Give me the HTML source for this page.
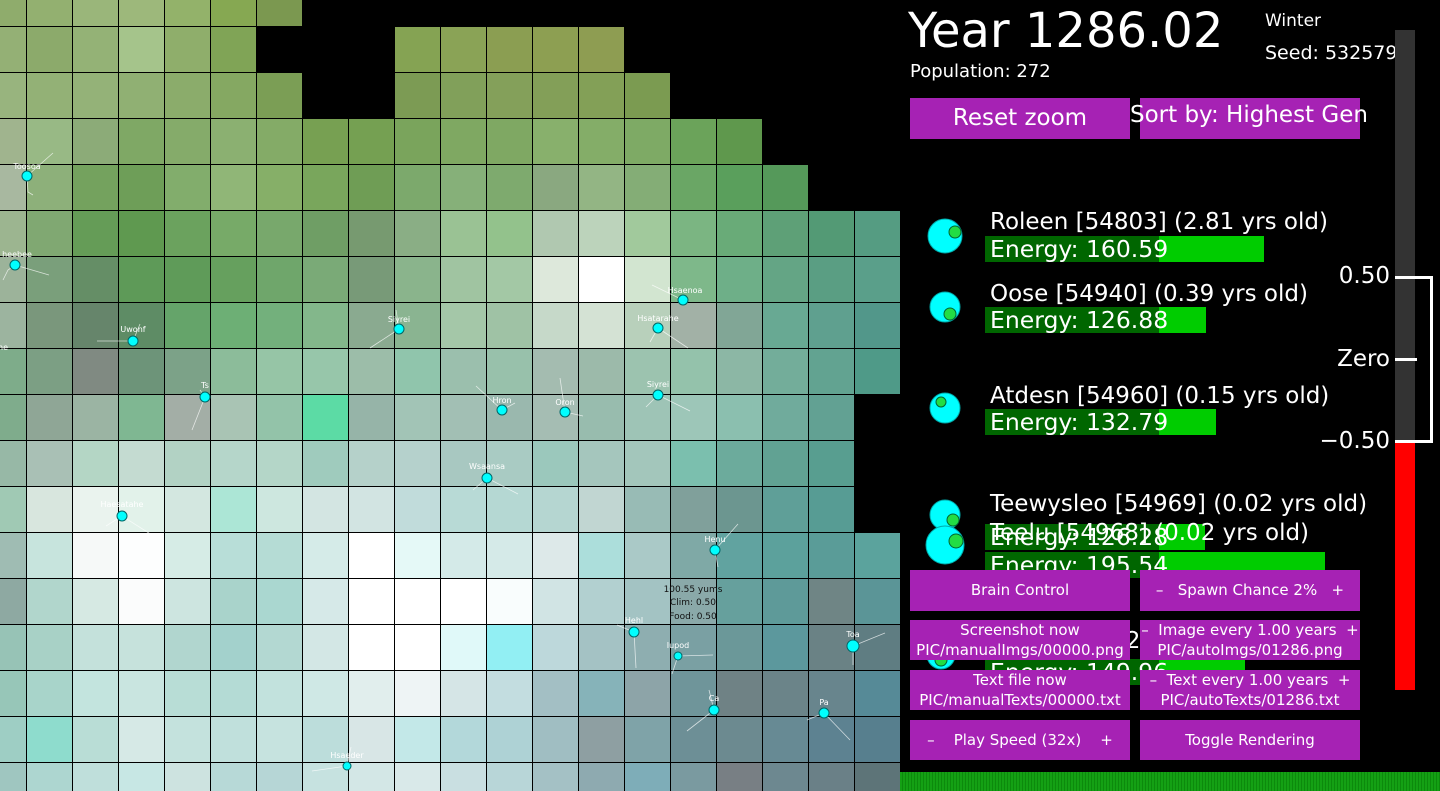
<!DOCTYPE html>
<html style="height:791px;overflow:hidden"><head><meta charset="utf-8"><style>
*{margin:0;padding:0;box-sizing:border-box}
html,body{width:1440px;height:791px;overflow:hidden}
body{background:#000;position:relative;font-family:"DejaVu Sans","Liberation Sans",sans-serif;color:#fff}
#g{position:absolute;left:-19px;top:-19px;display:grid;grid-template-columns:repeat(20,45px);grid-auto-rows:45px;gap:1px;background:#000;width:920px;height:810px;overflow:hidden}
#g i{display:block}
.k{background:#000}
.t{position:absolute;white-space:nowrap;line-height:1}
.btn{position:absolute;background:#a622b4;width:220px;text-align:center;color:#fff;font-size:15px;white-space:nowrap;overflow:visible}
.bar{position:absolute;height:26px;background:#006600}
.bar b{position:absolute;top:0;bottom:0;background:#00cc00}
.en{position:absolute;left:5px;top:0px;font-size:23.5px;line-height:26px;white-space:nowrap}
.nm{position:absolute;font-size:23px;white-space:nowrap;line-height:1}
</style></head><body>
<div id="g">
<i style="background:#8fac6c"></i><i style="background:#93b070"></i><i style="background:#9ab67a"></i><i style="background:#9db87b"></i><i style="background:#93b26a"></i><i style="background:#86a852"></i><i style="background:#7b9850"></i><i class="k"></i><i class="k"></i><i class="k"></i><i class="k"></i><i class="k"></i><i class="k"></i><i class="k"></i><i class="k"></i><i class="k"></i><i class="k"></i><i class="k"></i><i class="k"></i><i class="k"></i>
<i style="background:#94b075"></i><i style="background:#8caa6b"></i><i style="background:#94b276"></i><i style="background:#a5c48b"></i><i style="background:#8fae6b"></i><i style="background:#80a456"></i><i class="k"></i><i class="k"></i><i class="k"></i><i style="background:#85a353"></i><i style="background:#8aa356"></i><i style="background:#8b9e52"></i><i style="background:#8d9f52"></i><i style="background:#8e9d52"></i><i class="k"></i><i class="k"></i><i class="k"></i><i class="k"></i><i class="k"></i><i class="k"></i>
<i style="background:#98b47e"></i><i style="background:#93b176"></i><i style="background:#94b278"></i><i style="background:#90b073"></i><i style="background:#8bac6b"></i><i style="background:#85a862"></i><i style="background:#7b9e55"></i><i class="k"></i><i class="k"></i><i style="background:#7c9b54"></i><i style="background:#81a05a"></i><i style="background:#84a05a"></i><i style="background:#839f58"></i><i style="background:#83a057"></i><i style="background:#7b9b51"></i><i class="k"></i><i class="k"></i><i class="k"></i><i class="k"></i><i class="k"></i>
<i style="background:#a0b48e"></i><i style="background:#98b985"></i><i style="background:#8cab78"></i><i style="background:#7fa865"></i><i style="background:#85ab6a"></i><i style="background:#8bb071"></i><i style="background:#84ab67"></i><i style="background:#77a052"></i><i style="background:#75a052"></i><i style="background:#7aa45c"></i><i style="background:#7fa862"></i><i style="background:#7fa863"></i><i style="background:#88b06c"></i><i style="background:#84ad68"></i><i style="background:#7eaa65"></i><i style="background:#6ba35a"></i><i style="background:#5f984d"></i><i class="k"></i><i class="k"></i><i class="k"></i>
<i style="background:#a8b8a0"></i><i style="background:#8db07a"></i><i style="background:#74a25e"></i><i style="background:#6e9e58"></i><i style="background:#82ad6c"></i><i style="background:#90b677"></i><i style="background:#86af68"></i><i style="background:#79a65c"></i><i style="background:#6f9d55"></i><i style="background:#7ca96c"></i><i style="background:#86b079"></i><i style="background:#7eaa6e"></i><i style="background:#8aa880"></i><i style="background:#93b584"></i><i style="background:#84ad76"></i><i style="background:#6aa665"></i><i style="background:#5a9f5c"></i><i style="background:#55995a"></i><i class="k"></i><i class="k"></i>
<i style="background:#9cb590"></i><i style="background:#80a872"></i><i style="background:#659c57"></i><i style="background:#5f9950"></i><i style="background:#6ba25e"></i><i style="background:#77aa68"></i><i style="background:#78a86c"></i><i style="background:#6f9e65"></i><i style="background:#779a70"></i><i style="background:#8aae85"></i><i style="background:#9ac294"></i><i style="background:#93c28c"></i><i style="background:#b0c8b0"></i><i style="background:#bcd3bb"></i><i style="background:#a1c99c"></i><i style="background:#7bb582"></i><i style="background:#69ab78"></i><i style="background:#5ea077"></i><i style="background:#539a75"></i><i style="background:#559c82"></i>
<i style="background:#9cb39a"></i><i style="background:#7a9f7b"></i><i style="background:#658e66"></i><i style="background:#5e9a58"></i><i style="background:#5f9b59"></i><i style="background:#66a05e"></i><i style="background:#6fa66b"></i><i style="background:#7aaa77"></i><i style="background:#789a78"></i><i style="background:#8ab48c"></i><i style="background:#a0c4a1"></i><i style="background:#a3c8a5"></i><i style="background:#dde8db"></i><i style="background:#ffffff"></i><i style="background:#d2e5d0"></i><i style="background:#7eb88a"></i><i style="background:#6eaf88"></i><i style="background:#64a585"></i><i style="background:#5a9e83"></i><i style="background:#5a9f8a"></i>
<i style="background:#9cb49f"></i><i style="background:#7a977c"></i><i style="background:#66856b"></i><i style="background:#5e8c65"></i><i style="background:#65a46a"></i><i style="background:#6daf75"></i><i style="background:#73b07c"></i><i style="background:#83b78b"></i><i style="background:#8aaa90"></i><i style="background:#8ab491"></i><i style="background:#a4c7a8"></i><i style="background:#9fc2a5"></i><i style="background:#c6d9c9"></i><i style="background:#d4e2d4"></i><i style="background:#b8d0bb"></i><i style="background:#a2b1a6"></i><i style="background:#81a696"></i><i style="background:#68a993"></i><i style="background:#5fa08f"></i><i style="background:#52978a"></i>
<i style="background:#7eac8a"></i><i style="background:#7c9f84"></i><i style="background:#808a82"></i><i style="background:#6d9479"></i><i style="background:#7ca288"></i><i style="background:#8cbc9a"></i><i style="background:#96c5a6"></i><i style="background:#97c6aa"></i><i style="background:#9cbda9"></i><i style="background:#90c5ac"></i><i style="background:#9bbfad"></i><i style="background:#98c1ab"></i><i style="background:#a4bcb0"></i><i style="background:#9cbaaa"></i><i style="background:#9cc3af"></i><i style="background:#94c2ab"></i><i style="background:#8cb7a5"></i><i style="background:#73ad9a"></i><i style="background:#62a391"></i><i style="background:#4f9a88"></i>
<i style="background:#7fac8c"></i><i style="background:#8fa696"></i><i style="background:#9bb4a3"></i><i style="background:#7fb792"></i><i style="background:#a3aea6"></i><i style="background:#a9c4b4"></i><i style="background:#93c3a9"></i><i style="background:#5cdba5"></i><i style="background:#96b4a8"></i><i style="background:#a2c4b6"></i><i style="background:#a2bfb4"></i><i style="background:#9ab8ae"></i><i style="background:#a5bdb3"></i><i style="background:#98bcae"></i><i style="background:#9ec4b6"></i><i style="background:#9dc6b8"></i><i style="background:#8bbfaf"></i><i style="background:#70ab9c"></i><i style="background:#62a193"></i><i class="k"></i>
<i style="background:#97b8a6"></i><i style="background:#a9c0b5"></i><i style="background:#b4d6c5"></i><i style="background:#c4dbd1"></i><i style="background:#b2d2c4"></i><i style="background:#b5d6ca"></i><i style="background:#b4d6c8"></i><i style="background:#9fcbbd"></i><i style="background:#b5d1ca"></i><i style="background:#b5d1cc"></i><i style="background:#a8c8c1"></i><i style="background:#a9cbc3"></i><i style="background:#9bc8bc"></i><i style="background:#a5c6bd"></i><i style="background:#a3c6bb"></i><i style="background:#7bbfae"></i><i style="background:#6cab9c"></i><i style="background:#61a293"></i><i style="background:#589e90"></i><i class="k"></i>
<i style="background:#a0c9b4"></i><i style="background:#d8e6de"></i><i style="background:#eaf3ee"></i><i style="background:#e2f2ea"></i><i style="background:#d3e7e0"></i><i style="background:#ace6d6"></i><i style="background:#cde7df"></i><i style="background:#d3e5e2"></i><i style="background:#d2e4e2"></i><i style="background:#c1dcdb"></i><i style="background:#b8dad6"></i><i style="background:#b5d8d3"></i><i style="background:#b5d6d1"></i><i style="background:#c1d6d2"></i><i style="background:#98bbb5"></i><i style="background:#80a09b"></i><i style="background:#6c9690"></i><i style="background:#5f9f98"></i><i style="background:#579c94"></i><i class="k"></i>
<i style="background:#9fbcb3"></i><i style="background:#c7e4dd"></i><i style="background:#f6f9f8"></i><i style="background:#fdfefe"></i><i style="background:#d6ece6"></i><i style="background:#b8ded8"></i><i style="background:#b5dcd5"></i><i style="background:#d5ebe8"></i><i style="background:#ffffff"></i><i style="background:#e5f9f7"></i><i style="background:#d4eae8"></i><i style="background:#d5eae8"></i><i style="background:#dde9e9"></i><i style="background:#acdedb"></i><i style="background:#aac9c7"></i><i style="background:#7fa9a6"></i><i style="background:#61a3a0"></i><i style="background:#5ca19c"></i><i style="background:#5a9c98"></i><i style="background:#5ba39d"></i>
<i style="background:#8ea9a2"></i><i style="background:#b1d6cc"></i><i style="background:#d6e9e3"></i><i style="background:#fbfcfc"></i><i style="background:#cde5e0"></i><i style="background:#a9d3cb"></i><i style="background:#aad7d0"></i><i style="background:#d6e9e8"></i><i style="background:#ffffff"></i><i style="background:#ffffff"></i><i style="background:#ffffff"></i><i style="background:#f9fdfd"></i><i style="background:#d1e4e4"></i><i style="background:#b2d0d0"></i><i style="background:#a3c3c3"></i><i style="background:#8aa9a9"></i><i style="background:#66a09d"></i><i style="background:#5e9a99"></i><i style="background:#6f8585"></i><i style="background:#5b9597"></i>
<i style="background:#97c3b6"></i><i style="background:#a8d1c6"></i><i style="background:#c4e1db"></i><i style="background:#c6e2dc"></i><i style="background:#b1d6cf"></i><i style="background:#a3d1cc"></i><i style="background:#b3d8d2"></i><i style="background:#d3e7e5"></i><i style="background:#ffffff"></i><i style="background:#ffffff"></i><i style="background:#e0f9f9"></i><i style="background:#92eff3"></i><i style="background:#bdd8db"></i><i style="background:#a4c2c4"></i><i style="background:#8eaeb0"></i><i style="background:#7aa0a3"></i><i style="background:#6b9899"></i><i style="background:#5c989d"></i><i style="background:#6a8285"></i><i style="background:#5f7d82"></i>
<i style="background:#97c6b8"></i><i style="background:#a8d4ca"></i><i style="background:#c3e4de"></i><i style="background:#c9e5e0"></i><i style="background:#b8ddd6"></i><i style="background:#b4dbd5"></i><i style="background:#c2e2dd"></i><i style="background:#cfe8e5"></i><i style="background:#e1eeed"></i><i style="background:#eef4f5"></i><i style="background:#d5e5e6"></i><i style="background:#c3dde0"></i><i style="background:#a3bfc4"></i><i style="background:#86b3b9"></i><i style="background:#8da4a8"></i><i style="background:#6f959a"></i><i style="background:#6f8285"></i><i style="background:#6b8489"></i><i style="background:#68858d"></i><i style="background:#568a97"></i>
<i style="background:#9ecec4"></i><i style="background:#8edccd"></i><i style="background:#b9ddd6"></i><i style="background:#d6e9e6"></i><i style="background:#c4e2dd"></i><i style="background:#c0e0dc"></i><i style="background:#c6e3df"></i><i style="background:#bcdddb"></i><i style="background:#d8e6e6"></i><i style="background:#c3e8e8"></i><i style="background:#b3d8da"></i><i style="background:#aed2d5"></i><i style="background:#a0bec2"></i><i style="background:#8e9fa2"></i><i style="background:#7fa3a8"></i><i style="background:#6d8f96"></i><i style="background:#6c8a90"></i><i style="background:#678a94"></i><i style="background:#5d8291"></i><i style="background:#577f8e"></i>
<i style="background:#9fc6c0"></i><i style="background:#add6d0"></i><i style="background:#bfdfdb"></i><i style="background:#c7e7e4"></i><i style="background:#cde3e0"></i><i style="background:#b7d9d7"></i><i style="background:#b6d6d6"></i><i style="background:#c6e2e0"></i><i style="background:#d3e7e6"></i><i style="background:#d9e9e9"></i><i style="background:#c9dfe1"></i><i style="background:#b8d6d8"></i><i style="background:#a4c1c5"></i><i style="background:#8eaab0"></i><i style="background:#7eadb8"></i><i style="background:#7a9aa0"></i><i style="background:#787f84"></i><i style="background:#6d8890"></i><i style="background:#6a8087"></i><i style="background:#5d7478"></i>
</div>

<svg width="900" height="791" style="position:absolute;left:0;top:0" font-family="DejaVu Sans, Liberation Sans, sans-serif" font-size="8">
<g stroke="#fff" stroke-width="0.8" stroke-opacity="0.7" fill="none">
<path d="M27 176L53 153M27 176L28 192L33 195"/><path d="M15 265L49 275M15 265L8 270L3 280"/><path d="M133 341L97 341M133 341L140 324"/><path d="M399 329L370 348M399 329L396 310"/><path d="M683 300L652 285"/><path d="M658 328L688 348M658 328L650 342"/><path d="M205 397L192 430M205 397L200 390"/><path d="M502 410L476 386M502 410L515 403"/><path d="M565 412L560 378M565 412L583 416"/><path d="M658 395L690 411M658 395L646 407"/><path d="M487 478L518 494M487 478L473 490"/><path d="M122 516L152 535M122 516L106 526"/><path d="M715 550L738 524M715 550L718 567"/><path d="M634 632L636 668M634 632L617 625"/><path d="M678 656L713 655M678 656L672 674"/><path d="M853 646L885 633M853 646L853 665"/><path d="M714 710L687 731M714 710L709 690"/><path d="M824 713L850 740M824 713L807 720"/><path d="M347 766L312 771M347 766L351 747"/>
</g>
<g fill="#00ffff" stroke="#006666" stroke-width="1">
<circle cx="27" cy="176" r="5"/><circle cx="15" cy="265" r="5"/><circle cx="133" cy="341" r="5"/><circle cx="399" cy="329" r="5"/><circle cx="683" cy="300" r="5"/><circle cx="658" cy="328" r="5"/><circle cx="205" cy="397" r="5"/><circle cx="502" cy="410" r="5"/><circle cx="565" cy="412" r="5"/><circle cx="658" cy="395" r="5"/><circle cx="487" cy="478" r="5"/><circle cx="122" cy="516" r="5"/><circle cx="715" cy="550" r="5"/><circle cx="634" cy="632" r="5"/><circle cx="678" cy="656" r="4"/><circle cx="853" cy="646" r="6"/><circle cx="714" cy="710" r="5"/><circle cx="824" cy="713" r="5"/><circle cx="347" cy="766" r="4"/>
</g>
<g fill="#fff" text-anchor="middle">
<text x="27" y="169">Toosoa</text><text x="17" y="257">heebee</text><text x="133" y="332">Uwonf</text><text x="399" y="322">Siyrei</text><text x="685" y="293">Hsaenoa</text><text x="658" y="321">Hsatarahe</text><text x="205" y="388">Ts</text><text x="502" y="403">Hron</text><text x="565" y="405">Oron</text><text x="658" y="387">Siyrei</text><text x="487" y="469">Wsaansa</text><text x="122" y="507">Haesatahe</text><text x="715" y="542">Henu</text><text x="634" y="623">Hehl</text><text x="678" y="648">Iupod</text><text x="853" y="637">Toa</text><text x="714" y="701">Ca</text><text x="824" y="705">Pa</text><text x="347" y="758">Hsaeder</text><text x="3" y="350">he</text>
</g>
<g fill="#111" text-anchor="middle" font-size="9"><text x="693" y="592">100.55 yums</text><text x="693" y="605">Clim: 0.50</text><text x="693" y="619">Food: 0.50</text></g>
</svg>

<div class="t" style="left:908px;top:7px;font-size:48px">Year 1286.02</div>
<div class="t" style="left:1265px;top:13px;font-size:17px">Winter</div>
<div class="t" style="left:1265px;top:44px;font-size:19px">Seed: 532579</div>
<div class="t" style="left:910px;top:63px;font-size:18px">Population: 272</div>
<div class="btn" style="left:910px;top:98px;height:41px;font-size:23px;line-height:41px">Reset zoom</div>
<div class="btn" style="left:1140px;top:98px;height:41px;"></div>
<div class="t" style="left:1130px;top:104px;font-size:23px">Sort by: Highest Gen</div>

<svg width="90" height="500" style="position:absolute;left:900px;top:200px">
<g fill="#00ffff" stroke="#0aa" stroke-width="1"><circle cx="45" cy="36" r="17"/><circle cx="45" cy="107" r="15"/><circle cx="45" cy="208" r="15"/><circle cx="45" cy="315" r="15"/><circle cx="45" cy="345" r="19"/><circle cx="41" cy="455" r="14"/></g>
<g fill="#22dd44" stroke="#063" stroke-width="1"><circle cx="55" cy="32" r="6"/><circle cx="50" cy="114" r="6"/><circle cx="41" cy="202" r="5"/><circle cx="53" cy="320" r="6"/><circle cx="56" cy="341" r="7"/><circle cx="41" cy="460" r="6"/></g>
</svg>
<div class="nm" style="left:990px;top:211px">Roleen [54803] (2.81 yrs old)</div>
<div class="bar" style="left:985px;top:236px;width:279px"><b style="left:174px;right:0"></b><span class="en">Energy: 160.59</span></div>
<div class="nm" style="left:990px;top:283px">Oose [54940] (0.39 yrs old)</div>
<div class="bar" style="left:985px;top:307px;width:221px"><b style="left:174px;right:0"></b><span class="en">Energy: 126.88</span></div>
<div class="nm" style="left:990px;top:385px">Atdesn [54960] (0.15 yrs old)</div>
<div class="bar" style="left:985px;top:409px;width:231px"><b style="left:174px;right:0"></b><span class="en">Energy: 132.79</span></div>
<div class="nm" style="left:990px;top:493px">Teewysleo [54969] (0.02 yrs old)</div>
<div class="bar" style="left:985px;top:524px;width:220px"><b style="left:174px;right:0"></b><span class="en">Energy: 126.28</span></div>
<div class="nm" style="left:990px;top:522px">Teelu [54968] (0.02 yrs old)</div>
<div class="bar" style="left:985px;top:552px;width:340px"><b style="left:174px;right:0"></b><span class="en">Energy: 195.54</span></div>
<div class="nm" style="left:990px;top:630px">Oaeb [54962] (0.02 yrs old)</div>
<div class="bar" style="left:985px;top:659px;width:260px"><b style="left:174px;right:0"></b><span class="en">Energy: 149.96</span></div>

<div style="position:absolute;left:1395px;top:30px;width:20px;height:411px;background:#333"></div>
<div style="position:absolute;left:1395px;top:441px;width:20px;height:249px;background:#f00"></div>
<div style="position:absolute;left:1395px;top:276px;width:38px;height:167px;border:3px solid #fff;border-left:none"></div>
<div style="position:absolute;left:1395px;top:358px;width:22px;height:3px;background:#fff"></div>
<div class="t" style="right:50px;top:265px;font-size:23px">0.50</div>
<div class="t" style="right:50px;top:348px;font-size:23px">Zero</div>
<div class="t" style="right:50px;top:430px;font-size:23px">−0.50</div>

<div class="btn" style="left:910px;top:570px;height:41px;line-height:41px">Brain Control</div>
<div class="btn" style="left:1140px;top:570px;height:41px;line-height:41px">–&nbsp;&nbsp; Spawn Chance 2% &nbsp;&nbsp;+</div>
<div class="btn" style="left:910px;top:620px;height:40px;line-height:20px">Screenshot now<br>PIC/manualImgs/00000.png</div>
<div class="btn" style="left:1140px;top:620px;height:40px;line-height:20px">–&nbsp; Image every 1.00 years &nbsp;+<br>PIC/autoImgs/01286.png</div>
<div class="btn" style="left:910px;top:670px;height:40px;line-height:20px">Text file now<br>PIC/manualTexts/00000.txt</div>
<div class="btn" style="left:1140px;top:670px;height:40px;line-height:20px">–&nbsp; Text every 1.00 years &nbsp;+<br>PIC/autoTexts/01286.txt</div>
<div class="btn" style="left:910px;top:720px;height:40px;line-height:40px">–&nbsp;&nbsp;&nbsp; Play Speed (32x) &nbsp;&nbsp;&nbsp;+</div>
<div class="btn" style="left:1140px;top:720px;height:40px;line-height:40px">Toggle Rendering</div>

<div style="position:absolute;left:900px;top:772px;width:540px;height:19px;background:repeating-linear-gradient(90deg,#14a014 0 2px,#0c8a0c 2px 3px)"></div>
</body></html>
